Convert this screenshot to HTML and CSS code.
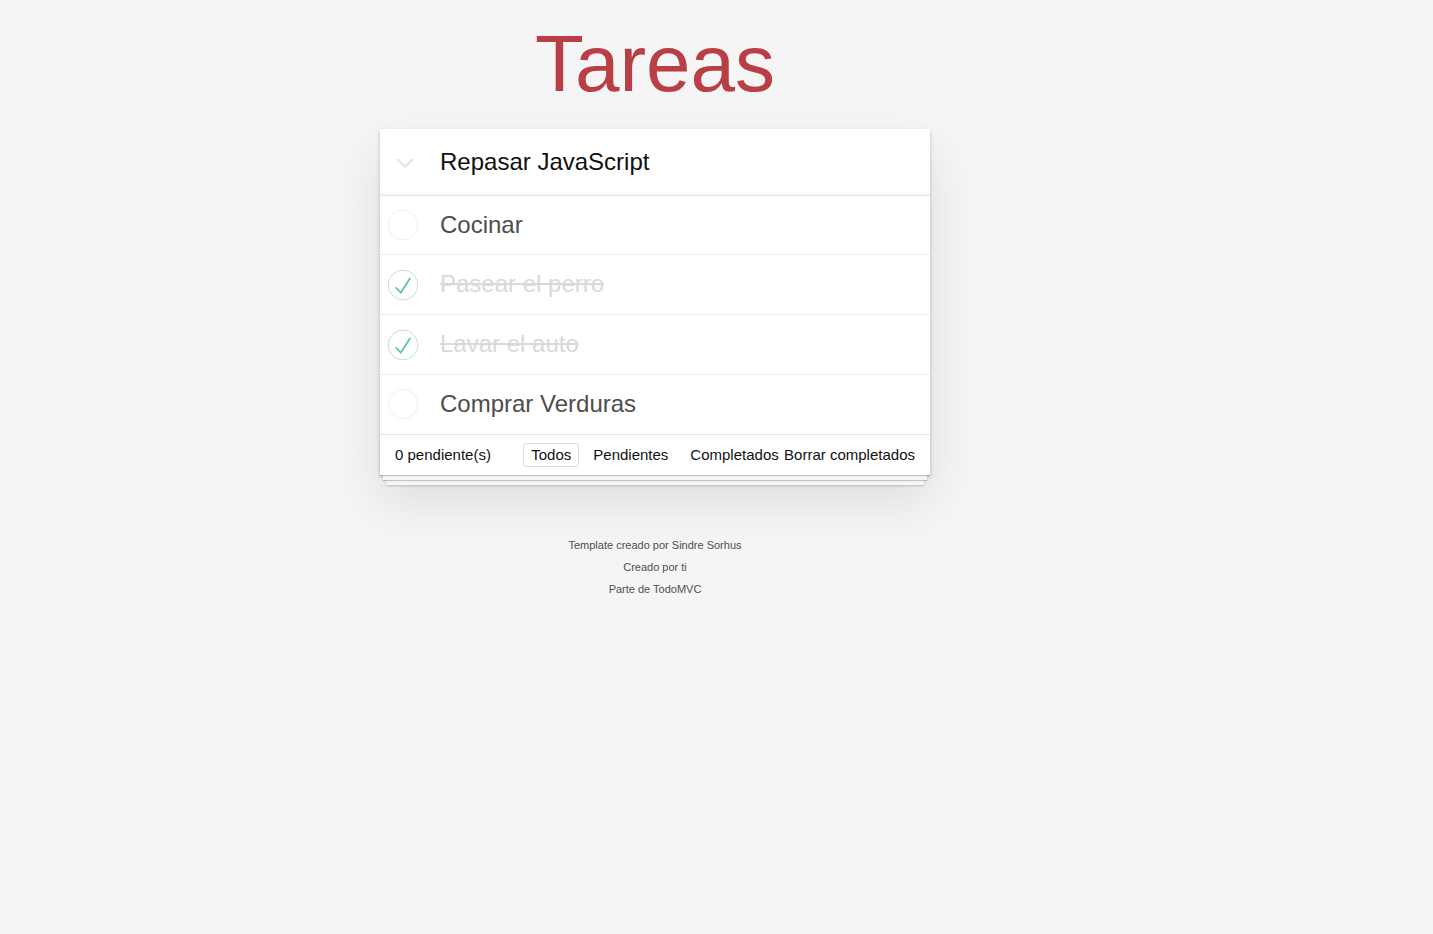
FILE: index.html
```html
<!DOCTYPE html>
<html lang="es">
<head>
<meta charset="utf-8">
<title>Tareas</title>
<link rel="stylesheet" href="styles.css">
</head>
<body>
<div class="page">
  <h1 class="title">Tareas</h1>
  <section class="todoapp">
    <header class="header">
      <span class="toggle-all">
        <svg width="18" height="11" viewBox="0 0 18 11"><polyline points="2,2 9,8.5 16,2" fill="none" stroke="#e6e6e6" stroke-width="2.4" stroke-linecap="round" stroke-linejoin="round"/></svg>
      </span>
      <div class="new-todo">Repasar JavaScript</div>
    </header>
    <ul class="todo-list">
      <li class="todo">
        <svg class="toggle" width="32" height="32" viewBox="-4 -4 108 108"><circle cx="50" cy="50" r="50" fill="none" stroke="#ededed" stroke-width="3"/></svg>
        <label class="label">Cocinar</label>
      </li>
      <li class="todo completed">
        <svg class="toggle" width="32" height="32" viewBox="-4 -4 108 108"><circle cx="50" cy="50" r="50" fill="none" stroke="#bddad5" stroke-width="3"/><path fill="#5dc2af" d="M72 25L42 71 27 56l-4 4 20 20 34-52z"/></svg>
        <label class="label">Pasear el perro</label>
      </li>
      <li class="todo completed">
        <svg class="toggle" width="32" height="32" viewBox="-4 -4 108 108"><circle cx="50" cy="50" r="50" fill="none" stroke="#bddad5" stroke-width="3"/><path fill="#5dc2af" d="M72 25L42 71 27 56l-4 4 20 20 34-52z"/></svg>
        <label class="label">Lavar el auto</label>
      </li>
      <li class="todo">
        <svg class="toggle" width="32" height="32" viewBox="-4 -4 108 108"><circle cx="50" cy="50" r="50" fill="none" stroke="#ededed" stroke-width="3"/></svg>
        <label class="label">Comprar Verduras</label>
      </li>
    </ul>
    <footer class="footer">
      <span class="todo-count">0 pendiente(s)</span>
      <ul class="filters"><li><a class="filter selected">Todos</a></li><li><a class="filter">Pendientes</a></li><li><a class="filter">Completados</a></li></ul>
      <span class="clear-completed">Borrar completados</span>
    </footer>
  </section>
  <footer class="info">
    <p>Template creado por <a>Sindre Sorhus</a></p>
    <p>Creado por ti</p>
    <p>Parte de <a>TodoMVC</a></p>
  </footer>
</div>
</body>
</html>
```

FILE: styles.css
```css
html, body {
  margin: 0;
  padding: 0;
}

body {
  max-width: 1310px;
  background: #f5f5f5;
  font-family: "Liberation Sans", Arial, Helvetica, sans-serif;
  font-size: 14px;
  line-height: 1.4em;
  color: #111111;
}

html {
  background: #f5f5f5;
}

.page {
  width: 550px;
  margin: 0 auto;
}

.title {
  margin: 24px 0 0 0;
  font-size: 80px;
  line-height: 80px;
  font-weight: normal;
  text-align: center;
  color: #b83f45;
}

.todoapp {
  margin: 25px 0 0 0;
  background: #fff;
  box-shadow: 0 2px 4px 0 rgba(0, 0, 0, 0.2), 0 25px 50px 0 rgba(0, 0, 0, 0.1);
}

.header {
  display: flex;
  align-items: center;
  box-shadow: inset 0 -2px 1px rgba(0, 0, 0, 0.03);
}

.toggle-all {
  width: 60px;
  flex: none;
  display: flex;
  padding-top: 3px;
}

.toggle-all svg {
  display: block;
  margin-left: 16px;
}

.new-todo {
  flex: 1;
  padding: 16px 16px 16px 0;
  font-size: 24px;
  line-height: 1.4em;
  color: #111111;
}

.todo-list {
  margin: 0;
  padding: 0;
  list-style: none;
  border-top: 1px solid #e6e6e6;
}

.todo {
  display: flex;
  align-items: center;
  font-size: 24px;
  border-bottom: 1px solid #ededed;
}

.todo:last-child {
  border-bottom: none;
}

.toggle {
  display: block;
  flex: none;
  margin-left: 7px;
}

.label {
  flex: 1;
  padding: 15px 15px 15px 21px;
  line-height: 1.2;
  color: #4d4d4d;
}

.completed .label {
  color: #d9d9d9;
  text-decoration: line-through;
}

.footer {
  display: grid;
  grid-template-columns: minmax(0, 1fr) auto minmax(0, 1fr);
  grid-template-rows: 20px;
  align-items: center;
  padding: 10px 15px;
  height: 20px;
  font-size: 15px;
  line-height: 20px;
  border-top: 1px solid #e6e6e6;
  color: #111111;
  box-shadow: 0 1px 1px rgba(0, 0, 0, 0.2),
    0 8px 0 -3px #f6f6f6,
    0 9px 1px -3px rgba(0, 0, 0, 0.2),
    0 16px 0 -6px #f6f6f6,
    0 17px 2px -6px rgba(0, 0, 0, 0.2);
}

.todo-count {
  justify-self: start;
  white-space: nowrap;
}

.filters {
  display: flex;
  align-self: center;
  margin: 0;
  padding: 0;
  list-style: none;
}

.filter {
  display: block;
  margin: 0 3px;
  padding: 3px 7px;
  line-height: 16px;
  border: 1px solid transparent;
  border-radius: 3px;
  color: inherit;
}

.filter.selected {
  border-color: rgba(175, 47, 47, 0.2);
}

.clear-completed {
  justify-self: end;
  white-space: nowrap;
}

.info {
  margin: 65px auto 0;
  color: #4d4d4d;
  font-size: 11px;
  text-shadow: 0 1px 0 rgba(255, 255, 255, 0.5);
  text-align: center;
}

.info p {
  line-height: 1;
  margin: 11px 0;
}

.info a {
  color: inherit;
}
```
